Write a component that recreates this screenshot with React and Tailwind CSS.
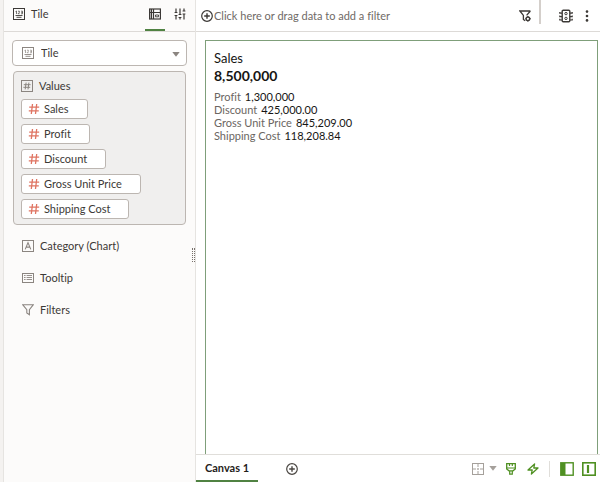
import { useState } from 'react';

const values = ['Sales', 'Profit', 'Discount', 'Gross Unit Price', 'Shipping Cost'];

const secondary = [
  { label: 'Profit', value: '1,300,000' },
  { label: 'Discount', value: '425,000.00' },
  { label: 'Gross Unit Price', value: '845,209.00' },
  { label: 'Shipping Cost', value: '118,208.84' },
];

function Icon({ className = '', children }) {
  return (
    <svg
      viewBox="0 0 12 12"
      className={`w-3 h-3 shrink-0 ${className}`}
      fill="none"
      stroke="currentColor"
      aria-hidden="true"
    >
      {children}
    </svg>
  );
}

function TileIcon({ className }) {
  return (
    <Icon className={className}>
      <rect x="0.5" y="0.5" width="11" height="11" />
      <path d="M2.5 3.6l1-.6v3M5 3.2h1.4v1.1L5 5.7h1.6M8 3.2h1.5v2.6H8M8.3 4.5h1.2" strokeWidth="0.7" />
      <path d="M2.5 7.5h7M3.5 9.3h5" strokeWidth="0.9" />
    </Icon>
  );
}

function ValuesIcon({ className }) {
  return (
    <Icon className={className}>
      <rect x="0.5" y="0.5" width="11" height="11" />
      <path d="M5.1 2.6L4.2 9.4M7.9 2.6L7 9.4M2.8 4.7h6.8M2.4 7.3h6.8" />
    </Icon>
  );
}

function HashIcon() {
  return (
    <Icon className="text-[#df7462]">
      <path d="M4.5 1L3.3 11M8.7 1L7.5 11M1.2 4.2h10M0.8 7.8h10" strokeWidth="1.3" />
    </Icon>
  );
}

function CategoryIcon({ className }) {
  return (
    <Icon className={className}>
      <rect x="0.5" y="0.5" width="11" height="11" />
      <path d="M3.2 9.4L6 2.6l2.8 6.8M4.2 7.1h3.6" strokeWidth="1.1" />
    </Icon>
  );
}

function TooltipIcon({ className }) {
  return (
    <Icon className={className}>
      <rect x="0.5" y="1.5" width="11" height="9" />
      <path d="M2 3.5h1.6M2 5.5h1.6M2 7.5h1.6M4.6 3.5H10M4.6 5.5H10M4.6 7.5H10" strokeWidth="0.9" />
    </Icon>
  );
}

function FunnelIcon({ className }) {
  return (
    <Icon className={className}>
      <path d="M0.8 0.8h10.4L7.4 5.6v5.2L4.8 9V5.6z" strokeWidth="1.1" />
    </Icon>
  );
}

function GrammarIcon() {
  return (
    <Icon>
      <rect x="0.6" y="1" width="10.8" height="10" strokeWidth="1.2" />
      <path d="M1 4.5h10.4M4.5 1v10" strokeWidth="1.2" />
      <path d="M2.4 1v10" strokeWidth="1.3" />
      <path d="M6.5 7h3v1.8h-3z" strokeWidth="0.9" />
    </Icon>
  );
}

function SlidersIcon() {
  return (
    <Icon>
      <path d="M2 0.5v4M2 7.5v4M6 0.5v6M6 9.5v2M10 0.5v2.5M10 6v5.5" strokeWidth="1.2" />
      <path d="M0.6 7.5h2.8M4.6 6.5h2.8M8.6 3h2.8M0.6 4.5h2.8M4.6 9.5h2.8M8.6 6h2.8" />
    </Icon>
  );
}

function PlusCircleIcon({ className }) {
  return (
    <Icon className={className}>
      <circle cx="6" cy="6" r="5.3" strokeWidth="1.2" />
      <path d="M6 3.2v5.6M3.2 6h5.6" strokeWidth="1.4" />
    </Icon>
  );
}

function FilterGearIcon() {
  return (
    <Icon>
      <path d="M11.4 1H0.9l3.5 4.4v4l1.8 1.4M11.4 1L7.6 5.4" strokeWidth="1.3" />
      <circle cx="8.9" cy="8.8" r="1.8" strokeWidth="1.4" />
      <path d="M8.9 5.9v1M8.9 10.7v1M6.2 8.8h.8M10.8 8.8h1" strokeWidth="1.1" />
    </Icon>
  );
}

function TrafficIcon() {
  return (
    <svg viewBox="0 0 14 14" className="w-3.5 h-3.5" fill="none" stroke="currentColor" aria-hidden="true">
      <rect x="3.2" y="1.2" width="7.6" height="11.6" rx="1" strokeWidth="1.4" />
      <circle cx="7" cy="4.6" r="1.2" />
      <circle cx="7" cy="9.4" r="1.2" />
      <path d="M0.8 3v1.2h2.2M0.8 6.4v1.2h2.2M0.8 9.8v1.2h2.2M13.2 3v1.2H11M13.2 6.4v1.2H11M13.2 9.8v1.2H11" strokeWidth="1.2" />
    </svg>
  );
}

function KebabIcon() {
  return (
    <Icon className="fill-current stroke-none">
      <circle cx="6" cy="1.6" r="1.3" />
      <circle cx="6" cy="6" r="1.3" />
      <circle cx="6" cy="10.4" r="1.3" />
    </Icon>
  );
}

function CaretIcon({ className = '' }) {
  return (
    <svg viewBox="0 0 8 5" className={`w-2 h-[5px] ${className}`} fill="currentColor" aria-hidden="true">
      <path d="M0.3 0h7.4L4 4.8z" />
    </svg>
  );
}

function GridIcon() {
  return (
    <Icon>
      <rect x="0.5" y="0.5" width="11" height="11" />
      <path d="M6 1v3M6 5.2v1.6M6 8v3M1 6h3M5.2 6h1.6M8 6h3" />
    </Icon>
  );
}

function BrushIcon() {
  return (
    <Icon>
      <path d="M1.7 0.7h8.6v5.2L8 7.8H4L1.7 5.9z" strokeWidth="1.3" />
      <path d="M1.7 5h8.6M4.5 1v2M7.3 1v2M4.7 8v3.2h2.6V8" strokeWidth="1.2" />
    </Icon>
  );
}

function BoltIcon() {
  return (
    <Icon>
      <path d="M7.6 0.9L1 7h4.2l-.8 4.1L11 5H6.8z" strokeWidth="1.3" strokeLinejoin="round" />
    </Icon>
  );
}

function LeftPanelIcon() {
  return (
    <svg viewBox="0 0 14 14" className="w-3.5 h-3.5" fill="none" stroke="currentColor" aria-hidden="true">
      <rect x="0.8" y="0.8" width="12.4" height="12.4" strokeWidth="1.4" />
      <path d="M1 1h4.5v12H1z" fill="currentColor" stroke="none" />
    </svg>
  );
}

function MiddlePanelIcon() {
  return (
    <svg viewBox="0 0 14 14" className="w-3.5 h-3.5" fill="none" stroke="currentColor" aria-hidden="true">
      <rect x="0.8" y="0.8" width="12.4" height="12.4" strokeWidth="1.6" />
      <path d="M6 3v8" strokeWidth="2.2" />
    </svg>
  );
}

const dropZones = [
  { label: 'Category (Chart)', icon: CategoryIcon },
  { label: 'Tooltip', icon: TooltipIcon },
  { label: 'Filters', icon: FunnelIcon },
];

function GrammarPanel() {
  const [type, setType] = useState('Tile');

  return (
    <aside className="w-[193px] shrink-0 flex flex-col bg-[#fcfbfa] border-x border-[#e6e4e1] text-[#3c3936]">
      <div className="h-8 shrink-0 flex items-stretch border-b border-[#dddad7] pl-[9px]">
        <h2 className="flex-1 flex items-center gap-1.5 pb-1">
          <TileIcon />
          Tile
        </h2>
        <button
          type="button"
          aria-label="Grammar"
          className="w-5 flex items-center justify-center border-b-2 border-[#508242] pb-0.5"
        >
          <GrammarIcon />
        </button>
        <button type="button" aria-label="Properties" className="w-[30px] flex items-center justify-center pb-1">
          <SlidersIcon />
        </button>
      </div>

      <div className="relative mt-2 mx-2">
        <TileIcon className="absolute left-2.5 top-[7px] text-[#8b8580] pointer-events-none" />
        <select
          aria-label="Visualization type"
          value={type}
          onChange={(e) => setType(e.target.value)}
          className="w-full h-[26px] appearance-none rounded-sm border border-[#bcb6b1] bg-white pl-7 pr-5"
        >
          <option>Tile</option>
        </select>
        <CaretIcon className="absolute right-[7px] top-3 text-[#8b8580] pointer-events-none" />
      </div>

      <section className="mt-[5px] mx-[9px] rounded-sm border border-[#bcb6b1] bg-[#f0efee] px-[7px] pt-1 pb-[5px]">
        <h3 className="h-5 flex items-center gap-1.5">
          <ValuesIcon className="text-[#8b8580]" />
          Values
        </h3>
        <ul className="mt-[3px] flex flex-col items-start gap-[5px]">
          {values.map((name) => (
            <li key={name}>
              <button
                type="button"
                className="h-5 flex items-center gap-1 rounded-[3px] border border-[#bcb6b1] bg-white pl-1.5 pr-[18px]"
              >
                <HashIcon />
                {name}
              </button>
            </li>
          ))}
        </ul>
      </section>

      <ul className="mt-[13px] ml-[18px] flex flex-col gap-4">
        {dropZones.map(({ label, icon: ZoneIcon }) => (
          <li key={label} className="h-4 flex items-center gap-1.5">
            <ZoneIcon className="text-[#8b8580]" />
            {label}
          </li>
        ))}
      </ul>
    </aside>
  );
}

function FilterBar() {
  return (
    <header className="h-8 shrink-0 flex items-center border-b border-[#dddad7] pl-[5px] pr-[7px] text-[#3c3936]">
      <button type="button" className="flex-1 h-full flex items-center gap-px text-[#6f6a66]">
        <PlusCircleIcon className="text-[#3c3936]" />
        Click here or drag data to add a filter
      </button>
      <button type="button" aria-label="Filter settings" className="mr-2">
        <FilterGearIcon />
      </button>
      <div className="h-full pb-[7px]">
        <div className="w-0.5 h-full bg-[#d4cfcb]" />
      </div>
      <button type="button" aria-label="Data actions" className="ml-[18px]">
        <TrafficIcon />
      </button>
      <button type="button" aria-label="Menu" className="ml-2">
        <KebabIcon />
      </button>
    </header>
  );
}

function Footer() {
  return (
    <footer className="h-7 shrink-0 flex items-center border-t border-[#e0deda] pr-1">
      <button
        type="button"
        className="h-full px-[9px] border-b-2 border-[#508242] font-bold text-[#1f1d1b]"
      >
        Canvas 1
      </button>
      <button type="button" aria-label="Add canvas" className="ml-7 text-[#4a4642]">
        <PlusCircleIcon />
      </button>
      <div className="ml-auto flex items-center text-[#4f9022]">
        <button type="button" aria-label="Canvas grid" className="flex items-center gap-[5px] text-[#a5a09b]">
          <GridIcon />
          <CaretIcon />
        </button>
        <button type="button" aria-label="Brushing" className="ml-2">
          <BrushIcon />
        </button>
        <button type="button" aria-label="Auto apply" className="ml-2.5">
          <BoltIcon />
        </button>
        <div className="w-px h-4 mx-2.5 bg-[#e0deda]" />
        <button type="button" aria-label="Toggle data panel">
          <LeftPanelIcon />
        </button>
        <button type="button" aria-label="Toggle grammar panel" className="ml-2">
          <MiddlePanelIcon />
        </button>
      </div>
    </footer>
  );
}

export default function App() {
  return (
    <div className="min-h-screen flex bg-[#f4f2f0] pl-[3px] text-[11px] leading-4 font-[Lato,sans-serif] [font-variant-ligatures:none]">
      <GrammarPanel />

      <div className="w-0 flex items-center">
        <div
          role="separator"
          aria-orientation="vertical"
          className="relative right-1 w-[3px] shrink-0 h-3.5 mt-7 border-x border-dotted border-[#77716c]"
        />
      </div>

      <div className="flex-1 min-w-0 flex flex-col bg-white">
        <FilterBar />
        <main className="flex-1 flex pt-2 pl-[9px] pr-0.5">
          <article className="flex-1 border border-b-0 border-[#7f9f7a] px-2 py-2 text-[#161513]">
            <h1 className="text-[13px] leading-[18px]">Sales</h1>
            <p className="text-sm leading-[18px] font-bold">8,500,000</p>
            <dl className="mt-[5px] leading-[13px]">
              {secondary.map((item) => (
                <div key={item.label} className="flex gap-1">
                  <dt className="text-[#6b6662]">{item.label}</dt>
                  <dd>{item.value}</dd>
                </div>
              ))}
            </dl>
          </article>
        </main>
        <Footer />
      </div>
    </div>
  );
}
